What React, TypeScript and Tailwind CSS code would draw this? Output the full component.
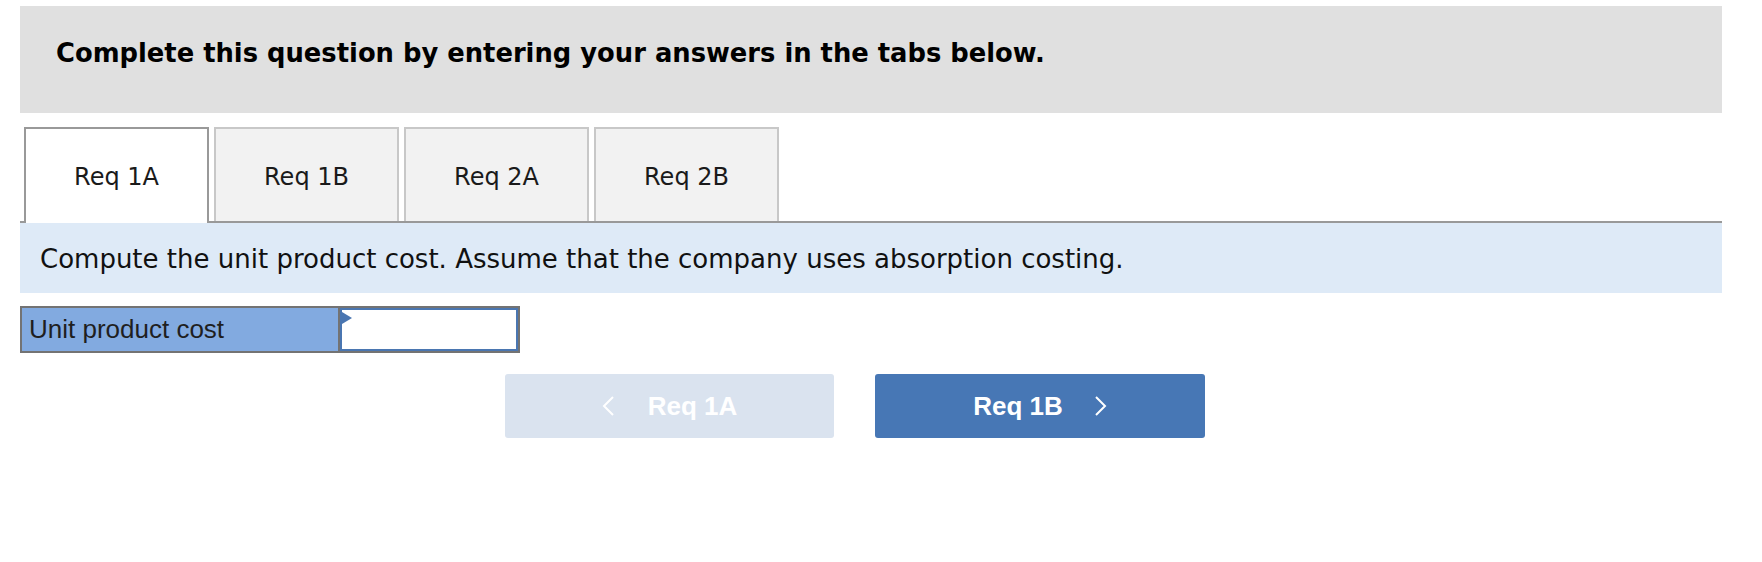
import React from "react";

const tabs = ["Req 1A", "Req 1B", "Req 2A", "Req 2B"];

export default function App() {
  const active = 0;

  return (
    <div className="min-h-screen bg-white pl-5 pr-10 pt-[6px] [font-family:'DejaVu_Sans',Verdana,sans-serif]">
      {/* Instructions */}
      <div className="h-[107px] bg-[#e0e0e0] pl-9 pt-[32px]">
        <h2 className="text-[25.8px] font-bold leading-[30px] text-black">
          Complete this question by entering your answers in the tabs below.
        </h2>
      </div>

      {/* Tabs */}
      <div className="mt-[14px] flex items-end gap-[5px] border-b-2 border-[#999999] pl-1">
        {tabs.map((t, i) =>
          i === active ? (
            <button
              key={t}
              className="relative -mb-[2px] flex h-[96px] w-[185px] items-center justify-center border-2 border-b-0 border-[#999999] bg-white pt-[2px] text-[24px] text-[#1a1a1a]"
            >
              {t}
            </button>
          ) : (
            <button
              key={t}
              className="flex h-[94px] w-[185px] items-center justify-center border-2 border-b-0 border-[#c8c8c8] bg-[#f2f2f2] pt-[4px] text-[24px] text-[#1a1a1a]"
            >
              {t}
            </button>
          )
        )}
      </div>

      {/* Question */}
      <div className="flex h-[70px] items-center bg-[#deeaf7] pl-5 pt-[3px]">
        <p className="text-[26px] text-[#111111]">
          Compute the unit product cost. Assume that the company uses absorption costing.
        </p>
      </div>

      {/* Answer row */}
      <div className="mt-[13px] flex w-[500px] border-2 border-[#737373] font-['Liberation_Sans',Arial,sans-serif]">
        <div className="flex h-[43px] w-[318px] items-center border-r-2 border-[#737373] bg-[#82aae0] pl-[7px] text-[26px] text-[#1f1f1f]">
          Unit product cost
        </div>
        <div className="relative h-[43px] flex-1 border-2 border-[#4a76b1] bg-white">
          <svg
            className="absolute left-0 top-[2px]"
            width="10"
            height="12"
            viewBox="0 0 10 12"
          >
            <polygon points="0,0 10,6 0,12" fill="#4a76b1" />
          </svg>
          <input className="h-full w-full bg-transparent px-3 text-[22px] outline-none" />
        </div>
      </div>

      {/* Navigation */}
      <div className="ml-[485px] mt-[21px] flex gap-[41px] font-['Liberation_Sans',Arial,sans-serif]">
        <button className="flex h-[64px] w-[329px] items-center justify-center gap-[33px] rounded-[3px] bg-[#dae3ef] text-[26px] font-bold text-white">
          <svg width="13" height="20" viewBox="0 0 13 20" fill="none" stroke="currentColor" strokeWidth="2">
            <polyline points="11,1 2,10 11,19" />
          </svg>
          <span>Req 1A</span>
        </button>
        <button className="flex h-[64px] w-[330px] items-center justify-center gap-[31px] rounded-[3px] bg-[#4777b5] text-[26px] font-bold text-white">
          <span>Req 1B</span>
          <svg width="13" height="20" viewBox="0 0 13 20" fill="none" stroke="currentColor" strokeWidth="2">
            <polyline points="2,1 11,10 2,19" />
          </svg>
        </button>
      </div>
    </div>
  );
}
